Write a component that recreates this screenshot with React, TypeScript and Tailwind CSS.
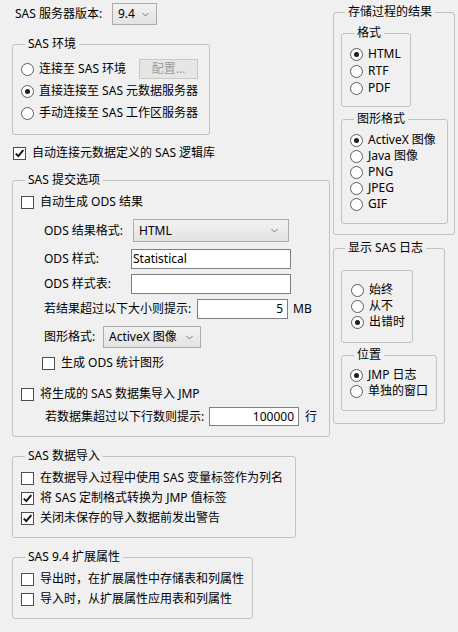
import React from "react";

const Radio = ({ checked = false }: { checked?: boolean }) => (
  <span className="w-[13px] h-[13px] rounded-full border border-[#5c5c5c] bg-white flex items-center justify-center shrink-0">
    {checked && <span className="w-[5px] h-[5px] rounded-full bg-[#1e1e1e]" />}
  </span>
);

const Check = ({ checked = false }: { checked?: boolean }) => (
  <span className="w-[13px] h-[13px] border border-[#4d4d4d] bg-white flex items-center justify-center shrink-0">
    {checked && (
      <svg width="11" height="11" viewBox="0 0 11 11">
        <path d="M1.8 5.6 L4.3 8.2 L9.3 2.2" fill="none" stroke="#111" strokeWidth="1.9" />
      </svg>
    )}
  </span>
);

const Chevron = () => (
  <svg width="7" height="5" viewBox="0 0 7 5" className="shrink-0">
    <path d="M0.5 1 L3.5 4 L6.5 1" fill="none" stroke="#7a7a7a" strokeWidth="1" />
  </svg>
);

const RadioRow = ({ checked, label, h = "h-[16px]" }: { checked?: boolean; label: string; h?: string }) => (
  <div className={`flex items-center gap-[5px] ${h}`}>
    <Radio checked={checked} />
    <span className="whitespace-nowrap">{label}</span>
  </div>
);

const CheckRow = ({ checked, label, cls = "" }: { checked?: boolean; label: string; cls?: string }) => (
  <div className={`flex items-center gap-[6px] h-[16px] ${cls}`}>
    <Check checked={checked} />
    <span className="whitespace-nowrap">{label}</span>
  </div>
);

const Group = ({ title, cls, children }: { title: string; cls: string; children: React.ReactNode }) => (
  <fieldset className={`border border-[#c2c2c2] rounded-[3px] min-w-0 ${cls}`}>
    <legend className="ml-[4px] px-[3px] leading-[16px] whitespace-nowrap">{title}</legend>
    {children}
  </fieldset>
);

const Select = ({ value, cls, pr }: { value: string; cls: string; pr: string }) => (
  <div
    className={`flex items-center justify-between border border-[#acacac] bg-gradient-to-b from-[#f2f2f2] to-[#e2e2e2] pl-[5px] ${pr} ${cls}`}
  >
    <span className="whitespace-nowrap">{value}</span>
    <Chevron />
  </div>
);

const Input = ({ value = "", cls, right = false }: { value?: string; cls: string; right?: boolean }) => (
  <div
    className={`flex items-center border border-[#7f7f7f] bg-white ${right ? "justify-end pr-[4px]" : "pl-[1px]"} ${cls}`}
  >
    <span className="whitespace-nowrap">{value}</span>
  </div>
);

export default function App() {
  return (
    <div
      className="w-[458px] h-[632px] bg-[#f0f0f0] flex text-[12px] leading-[16px] text-black overflow-hidden"
      style={{ fontFamily: '"Noto Sans", "Noto Sans CJK SC", sans-serif' }}
    >
      {/* Left column */}
      <div className="ml-[12px] w-[318px] flex flex-col shrink-0">
        <div className="mt-[3px] h-[22px] flex items-center pl-[3px]">
          <span className="w-[97px] whitespace-nowrap">SAS 服务器版本:</span>
          <Select value="9.4" cls="w-[45px] h-[22px]" pr="pr-[7px]" />
        </div>

        <Group title="SAS 环境" cls="mt-[11px] w-[198px] pl-[8px] pt-[6px] pb-[10px]">
          <div className="flex items-center h-[22px]">
            <div className="w-[118px]">
              <RadioRow label="连接至 SAS 环境" />
            </div>
            <div className="w-[59px] h-[20px] border border-[#c9c9c9] bg-[#e6e6e6] text-[#9d9d9d] flex items-center justify-center">
              配置...
            </div>
          </div>
          <RadioRow checked label="直接连接至 SAS 元数据服务器" h="h-[22px]" />
          <RadioRow label="手动连接至 SAS 工作区服务器" h="h-[22px]" />
        </Group>

        <CheckRow checked label="自动连接元数据定义的 SAS 逻辑库" cls="mt-[10px] ml-[1px]" />

        <Group title="SAS 提交选项" cls="mt-[11px] w-[318px] pl-[8px] pt-[6px] pb-[10px]">
          <CheckRow label="自动生成 ODS 结果" />
          <div className="mt-[9px] ml-[23px] flex items-center h-[23px]">
            <span className="w-[89px] whitespace-nowrap">ODS 结果格式:</span>
            <Select value="HTML" cls="w-[156px] h-[23px]" pr="pr-[10px]" />
          </div>
          <div className="mt-[7px] ml-[23px] flex items-center h-[20px]">
            <span className="w-[87px] whitespace-nowrap">ODS 样式:</span>
            <Input value="Statistical" cls="w-[160px] h-[20px]" />
          </div>
          <div className="mt-[5px] ml-[23px] flex items-center h-[20px]">
            <span className="w-[87px] whitespace-nowrap">ODS 样式表:</span>
            <Input cls="w-[160px] h-[20px]" />
          </div>
          <div className="mt-[5px] ml-[23px] flex items-center h-[20px]">
            <span className="w-[153px] whitespace-nowrap">若结果超过以下大小则提示:</span>
            <Input value="5" right cls="w-[91px] h-[20px]" />
            <span className="ml-[5px]">MB</span>
          </div>
          <div className="mt-[7px] ml-[23px] flex items-center h-[22px]">
            <span className="w-[59px] whitespace-nowrap">图形格式:</span>
            <Select value="ActiveX 图像" cls="w-[98px] h-[22px]" pr="pr-[7px]" />
          </div>
          <CheckRow label="生成 ODS 统计图形" cls="mt-[7px] ml-[21px]" />
          <CheckRow label="将生成的 SAS 数据集导入 JMP" cls="mt-[15px]" />
          <div className="mt-[5px] ml-[24px] flex items-center h-[19px]">
            <span className="w-[164px] whitespace-nowrap">若数据集超过以下行数则提示:</span>
            <Input value="100000" right cls="w-[90px] h-[19px]" />
            <span className="ml-[6px]">行</span>
          </div>
        </Group>

        <Group title="SAS 数据导入" cls="mt-[11px] w-[284px] pl-[8px] pt-[6px] pb-[11px]">
          <div className="flex flex-col gap-[4px]">
            <CheckRow label="在数据导入过程中使用 SAS 变量标签作为列名" />
            <CheckRow checked label="将 SAS 定制格式转换为 JMP 值标签" />
            <CheckRow checked label="关闭未保存的导入数据前发出警告" />
          </div>
        </Group>

        <Group title="SAS 9.4 扩展属性" cls="mt-[11px] w-[241px] pl-[8px] pt-[6px] pb-[11px]">
          <div className="flex flex-col gap-[4px]">
            <CheckRow label="导出时，在扩展属性中存储表和列属性" />
            <CheckRow label="导入时，从扩展属性应用表和列属性" />
          </div>
        </Group>
      </div>

      {/* Right column */}
      <div className="ml-[3px] w-[122px] flex flex-col shrink-0">
        <Group title="存储过程的结果" cls="mt-[4px] w-[122px] pl-[7px] pt-[5px] pb-[10px]">
          <Group title="格式" cls="w-[70px] pl-[8px] pt-[5px] pb-[10px]">
            <div className="flex flex-col gap-[1px]">
              <RadioRow checked label="HTML" />
              <RadioRow label="RTF" />
              <RadioRow label="PDF" />
            </div>
          </Group>
          <Group title="图形格式" cls="mt-[4px] w-[107px] pl-[8px] pt-[5px] pb-[11px]">
            <div className="flex flex-col">
              <RadioRow checked label="ActiveX 图像" />
              <RadioRow label="Java 图像" />
              <RadioRow label="PNG" />
              <RadioRow label="JPEG" />
              <RadioRow label="GIF" />
            </div>
          </Group>
        </Group>

        <Group title="显示 SAS 日志" cls="mt-[5px] w-[112px] pl-[7px] pt-[14px] pb-[12px]">
          <div className="w-[72px] border border-[#c2c2c2] rounded-[3px] pl-[9px] pt-[11px] pb-[12px]">
            <RadioRow label="始终" />
            <RadioRow label="从不" />
            <RadioRow checked label="出错时" />
          </div>
          <Group title="位置" cls="mt-[4px] w-[96px] pl-[8px] pt-[4px] pb-[11px]">
            <RadioRow checked label="JMP 日志" />
            <RadioRow label="单独的窗口" />
          </Group>
        </Group>
      </div>
    </div>
  );
}
